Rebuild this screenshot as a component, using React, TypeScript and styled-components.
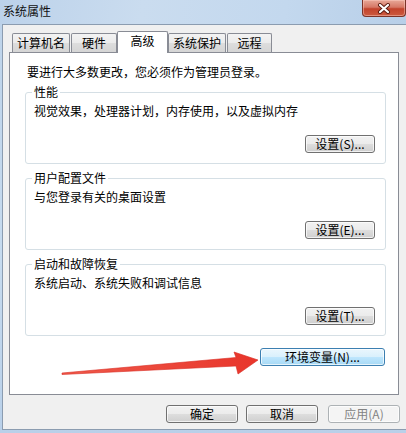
import React from "react";
import styled, { createGlobalStyle } from "styled-components";

const GlobalStyle = createGlobalStyle`
  html, body { margin: 0; padding: 0; }
  body {
    font-family: "Noto Sans CJK SC", "Noto Sans", "Liberation Sans", sans-serif;
    font-size: 12px;
    color: #000;
  }
  * { box-sizing: border-box; }
`;

const Window = styled.div`
  position: relative;
  width: 406px;
  height: 433px;
  display: flex;
  flex-direction: column;
  background: linear-gradient(to bottom, #bdd3ea 0%, #c6dbef 60%, #b9d0e9 100%);
  overflow: hidden;
`;

const TitleBar = styled.div`
  height: 24px;
  display: flex;
  align-items: flex-start;
  padding-left: 3px;
  background: linear-gradient(100deg, #bcd2ea 0%, #cadcef 35%, #c3d8ee 70%, #b8cfe8 100%);
`;

const Title = styled.div`
  line-height: 22px;
  font-size: 12px;
  color: #111;
`;

const CloseButton = styled.div`
  margin-left: auto;
  width: 44px;
  height: 17px;
  border: 1px solid #7b3328;
  border-top: none;
  border-radius: 0 0 4px 4px;
  background: linear-gradient(to bottom, #e8a898 0%, #d67866 45%, #c2432c 55%, #cc5a3f 100%);
  box-shadow: inset 0 0 0 1px rgba(255, 210, 200, 0.45);
  display: flex;
  align-items: center;
  justify-content: center;
`;

const Body = styled.div`
  flex: 1;
  margin: 0 0 3px 2px;
  border-top: 1px solid #8b9cb0;
  border-left: 1px solid #8b9cb0;
  border-bottom: 1px solid #8b9cb0;
  background: #f0f0f0;
  padding: 6px 7px 0 6px;
  display: flex;
  flex-direction: column;
`;

const TabRow = styled.div`
  display: flex;
  align-items: flex-start;
  height: 21px;
  padding-left: 3px;
  position: relative;
  z-index: 1;
`;

const Tab = styled.div<{ $active?: boolean; $w: number; $gap?: number }>`
  width: ${(p) => p.$w}px;
  margin-left: ${(p) => p.$gap ?? 0}px;
  height: ${(p) => (p.$active ? 22 : 19)}px;
  margin-top: ${(p) => (p.$active ? 0 : 2)}px;
  border: 1px solid #898c95;
  border-bottom: none;
  border-radius: 2px 2px 0 0;
  background: ${(p) =>
    p.$active ? "#ffffff" : "linear-gradient(to bottom, #f3f3f3 0%, #ebebeb 50%, #dddddd 51%, #d5d5d5 100%)"};
  display: flex;
  align-items: center;
  justify-content: center;
  line-height: 16px;
  padding-bottom: ${(p) => (p.$active ? 3 : 0)}px;
  font-size: 12px;
`;

const Panel = styled.div`
  height: 343px;
  border: 1px solid #898c95;
  background: #ffffff;
  padding: 11px 12px 0 15px;
  display: flex;
  flex-direction: column;
`;

const Intro = styled.div`
  line-height: 16px;
  padding-left: 2px;
`;

const Group = styled.div<{ $mt: number }>`
  position: relative;
  margin-top: ${(p) => p.$mt}px;
  height: 72px;
  border: 1px solid #d5dfe5;
  border-radius: 3px;
  padding: 10px 10px 10px 8px;
  display: flex;
  flex-direction: column;
  justify-content: space-between;
`;

const Legend = styled.span`
  position: absolute;
  top: -9px;
  left: 6px;
  padding: 0 2px;
  background: #ffffff;
  line-height: 16px;
`;

const Desc = styled.div`
  line-height: 16px;
`;

const ButtonRow = styled.div<{ $mt?: number; $pr?: number }>`
  display: flex;
  justify-content: flex-end;
  margin-top: ${(p) => p.$mt ?? 0}px;
  padding-right: ${(p) => p.$pr ?? 0}px;
`;

const Button = styled.div<{ $w: number; $kind?: "default" | "disabled"; $ml?: number }>`
  width: ${(p) => p.$w}px;
  height: 18px;
  margin-left: ${(p) => p.$ml ?? 0}px;
  border-radius: 3px;
  border: 1px solid
    ${(p) => (p.$kind === "default" ? "#3c7fb1" : p.$kind === "disabled" ? "#adb2b5" : "#707070")};
  background: ${(p) =>
    p.$kind === "default"
      ? "linear-gradient(to bottom, #eaf6fd 0%, #d9f0fc 50%, #bee6fd 51%, #a7d9f5 100%)"
      : p.$kind === "disabled"
      ? "#f4f4f4"
      : "linear-gradient(to bottom, #f2f2f2 0%, #ebebeb 50%, #dddddd 51%, #cfcfcf 100%)"};
  box-shadow: inset 0 0 0 1px rgba(255, 255, 255, 0.7);
  color: ${(p) => (p.$kind === "disabled" ? "#838383" : "#000")};
  display: flex;
  align-items: center;
  justify-content: center;
  font-size: 12px;
  line-height: 14px;
  white-space: nowrap;
`;

const Footer = styled.div`
  display: flex;
  justify-content: flex-end;
  margin-top: 10px;
  margin-right: -1px;
`;

const ArrowLayer = styled.svg`
  position: absolute;
  left: 0;
  top: 0;
  pointer-events: none;
`;

const groups = [
  { legend: "性能", desc: "视觉效果，处理器计划，内存使用，以及虚拟内存", btn: "设置(S)...", mt: 12 },
  { legend: "用户配置文件", desc: "与您登录有关的桌面设置", btn: "设置(E)...", mt: 14 },
  { legend: "启动和故障恢复", desc: "系统启动、系统失败和调试信息", btn: "设置(T)...", mt: 14 },
];

export default function App() {
  return (
    <>
      <GlobalStyle />
      <Window>
        <TitleBar>
          <Title>系统属性</Title>
          <CloseButton>
            <svg width="14" height="11" viewBox="0 0 14 11">
              <path d="M3 2 L11 9 M11 2 L3 9" stroke="#5a1a10" strokeWidth="4" strokeLinecap="round" />
              <path d="M3 2 L11 9 M11 2 L3 9" stroke="#ffffff" strokeWidth="2.2" strokeLinecap="round" />
            </svg>
          </CloseButton>
        </TitleBar>
        <Body>
          <TabRow>
            <Tab $w={58}>计算机名</Tab>
            <Tab $w={46} $gap={1}>硬件</Tab>
            <Tab $w={51} $active>高级</Tab>
            <Tab $w={58}>系统保护</Tab>
            <Tab $w={45} $gap={1}>远程</Tab>
          </TabRow>
          <Panel>
            <Intro>要进行大多数更改，您必须作为管理员登录。</Intro>
            {groups.map((g) => (
              <Group key={g.legend} $mt={g.mt}>
                <Legend>{g.legend}</Legend>
                <Desc>{g.desc}</Desc>
                <ButtonRow>
                  <Button $w={70}>{g.btn}</Button>
                </ButtonRow>
              </Group>
            ))}
            <ButtonRow $mt={12} $pr={1}>
              <Button $w={125} $kind="default">环境变量(N)...</Button>
            </ButtonRow>
          </Panel>
          <Footer>
            <Button $w={72}>确定</Button>
            <Button $w={72} $ml={8}>取消</Button>
            <Button $w={72} $ml={10} $kind="disabled">应用(A)</Button>
          </Footer>
        </Body>
        <ArrowLayer width="406" height="433" viewBox="0 0 406 433">
          <defs>
            <linearGradient id="arrowFill" x1="0" y1="0" x2="1" y2="0">
              <stop offset="0" stopColor="#ef5a4a" />
              <stop offset="1" stopColor="#e8352b" />
            </linearGradient>
          </defs>
          <polygon
            points="62,373 236,357.5 234,352 258,360 238,374 236,366 62,374.5"
            fill="url(#arrowFill)"
            stroke="#d92a22"
            strokeWidth="0.6"
            strokeLinejoin="round"
          />
        </ArrowLayer>
      </Window>
    </>
  );
}
